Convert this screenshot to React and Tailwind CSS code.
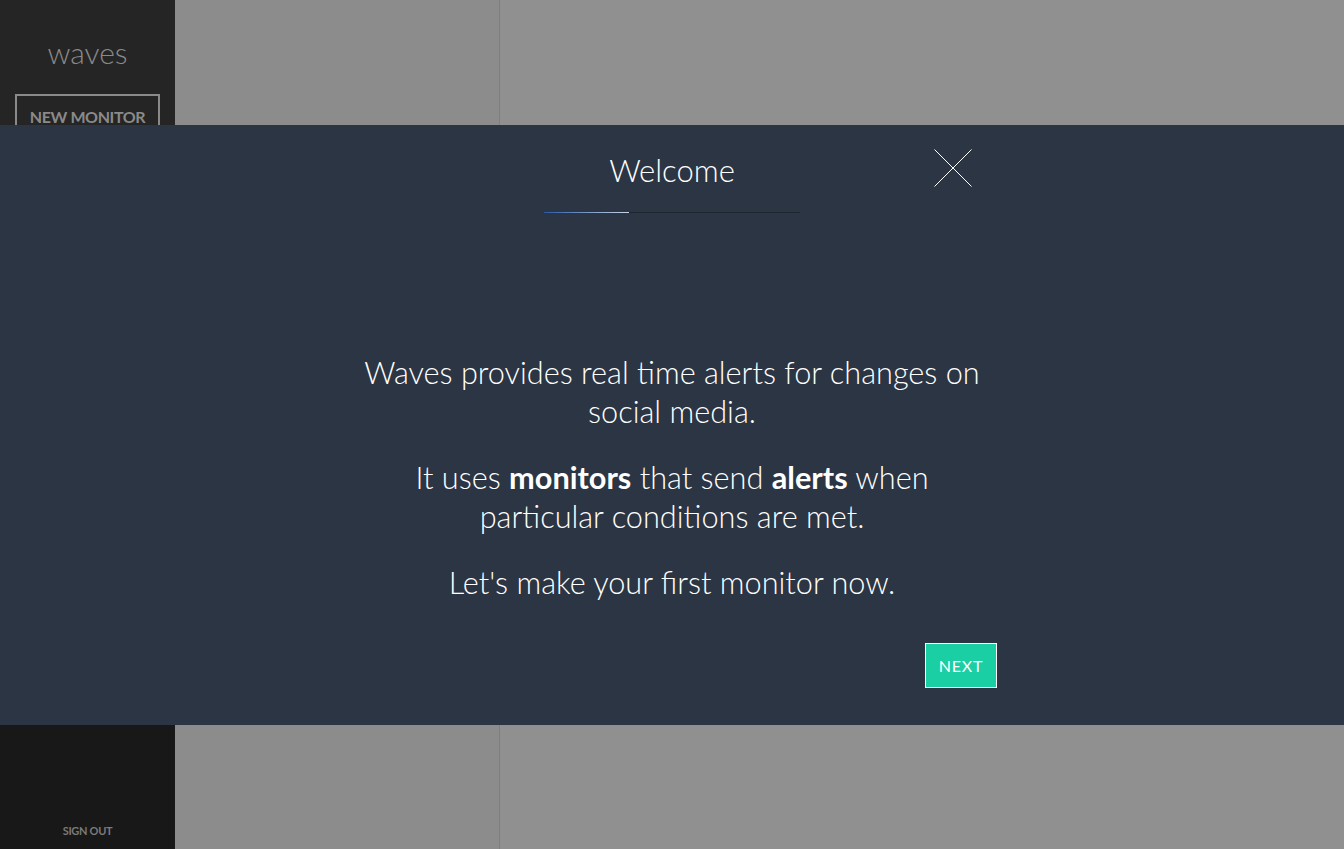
import React from "react";

const light = { fontFamily: "'Lato Light', 'Lato', sans-serif" };

export default function App() {
  return (
    <div className="relative w-[1344px] h-[849px] overflow-hidden flex" style={{ fontFamily: "Lato, 'Open Sans', sans-serif" }}>
      <aside className="w-[175px] h-full flex flex-col bg-[#181818]">
        <div className="bg-[#252525] h-[300px] flex flex-col items-center pt-[34px]">
          <div className="text-[30px] font-light text-[#8a8a8a] leading-[36px]" style={light}>waves</div>
          <div className="mt-[24px] w-[145px] h-[46px] border-2 border-[#8a8a8a] flex items-center justify-center text-[16px] font-bold text-[#8a8a8a] tracking-[-0.4px]">
            NEW MONITOR
          </div>
        </div>
        <div className="flex-1" />
        <div className="pb-[10px] text-center text-[11px] font-bold text-[#7a7a7a] tracking-[-0.3px]">SIGN OUT</div>
      </aside>
      <div className="w-[325px] h-full bg-[#8c8c8c] border-r border-[#7f7f7f]" />
      <div className="flex-1 h-full bg-[#909090]" />

      <div className="absolute left-0 right-0 top-[125px] h-[600px] bg-[#2c3543] flex flex-col items-center">
        <div className="relative w-[650px] flex flex-col items-center pt-[25px]">
          <div className="text-[31px] font-light text-white leading-[40px]" style={light}>Welcome</div>
          <div className="mt-[22px] w-[256px] h-px bg-[#1d242e] flex">
            <div className="w-[85px] h-px bg-gradient-to-r from-[#2a5aa8] to-[#c8d4e4]" />
          </div>
          <button className="absolute right-[25px] top-[24px] w-[38px] h-[38px]">
            <svg width="38" height="38" viewBox="0 0 38 38">
              <line x1="0.5" y1="0.5" x2="37.5" y2="37.5" stroke="white" strokeWidth="1" />
              <line x1="37.5" y1="0.5" x2="0.5" y2="37.5" stroke="white" strokeWidth="1" />
            </svg>
          </button>
        </div>
        <div className="w-[650px] mt-[140px] flex flex-col items-center text-center text-white font-light text-[30.7px] leading-[39px]" style={light}>
          <p className="w-[630px]">Waves provides real time alerts for changes on social media.</p>
          <p className="w-[630px] mt-[27px]">It uses <span className="font-bold" style={{ fontFamily: "Lato, sans-serif" }}>monitors</span> that send <span className="font-bold" style={{ fontFamily: "Lato, sans-serif" }}>alerts</span> when particular conditions are met.</p>
          <p className="w-[630px] mt-[27px]">Let's make your first monitor now.</p>
          <div className="w-full flex justify-end mt-[41px]">
            <button className="w-[72px] h-[45px] bg-[#19cfa3] border border-white text-white text-[16px] font-normal tracking-[0.8px] flex items-center justify-center" style={{ fontFamily: "Lato, sans-serif" }}>
              NEXT
            </button>
          </div>
        </div>
      </div>
    </div>
  );
}
